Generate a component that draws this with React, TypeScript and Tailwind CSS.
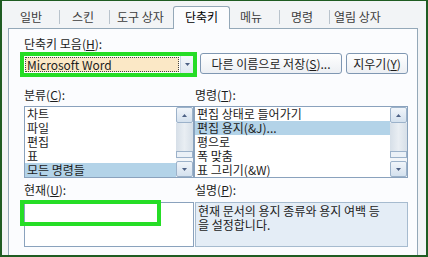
type ListBoxProps = {
  items: string[];
  selected: number;
  className: string;
};

function Mn({ children }: { children: string }) {
  return <span className="underline underline-offset-[1px]">{children}</span>;
}

function Arrow({ up }: { up?: boolean }) {
  return (
    <svg width="5" height="3" viewBox="0 0 5 3" className="text-[#4d6185]">
      <path d={up ? 'M0 3L2.5 0L5 3Z' : 'M0 0L2.5 3L5 0Z'} fill="currentColor" />
    </svg>
  );
}

function ScrollBar() {
  return (
    <div className="w-[17px] shrink-0 flex flex-col bg-[#f3f6f9]">
      <div className="h-[16px] flex items-center justify-center border border-[#9cb2ca] rounded-[2px] bg-gradient-to-b from-[#f1f5fa] to-[#d4e1ee]">
        <Arrow up />
      </div>
      <div className="flex-1 bg-gradient-to-r from-[#d6dfe8] via-[#e9eef3] to-[#d6dfe8]" />
      <div className="h-[7px] border border-[#9cb2ca] bg-[#ebf1f7]" />
      <div className="h-[3px]" />
      <div className="h-[16px] flex items-center justify-center border border-[#9cb2ca] rounded-[2px] bg-gradient-to-b from-[#f1f5fa] to-[#d4e1ee]">
        <Arrow />
      </div>
    </div>
  );
}

function ListBox({ items, selected, className }: ListBoxProps) {
  return (
    <div className={`h-[72px] flex border border-[#8aa2bd] bg-white ${className}`}>
      <div className="flex-1 flex flex-col">
        {items.map((item, i) => (
          <div
            key={item}
            className={`h-[14px] leading-[14px] pl-[2px] whitespace-nowrap ${
              i === selected ? 'bg-[#b3d3e8]' : ''
            }`}
          >
            {item}
          </div>
        ))}
      </div>
      <ScrollBar />
    </div>
  );
}

function Sep() {
  return <div className="w-px h-[14px] mt-[9px] bg-[#b9c3cc]" />;
}

export default function App() {
  return (
    <div className="w-[428px] h-[257px] overflow-hidden flex flex-col border-x-2 border-b-2 border-t border-[#1f5c22] bg-[#f2f4f6] text-[12px] text-[#1c1c1c] font-['Noto_Sans_CJK_KR',sans-serif]">
      {/* tabs */}
      <div className="h-[27px] shrink-0 flex items-start text-[#3c3c3c] leading-[14px]">
        <span className="ml-[18px] mt-[9px] w-[24px] whitespace-nowrap">일반</span>
        <div className="ml-[15px]"><Sep /></div>
        <span className="ml-[12px] mt-[9px] w-[24px] whitespace-nowrap">스킨</span>
        <div className="ml-[13px]"><Sep /></div>
        <span className="ml-[7px] mt-[9px] w-[51px] whitespace-nowrap">도구 상자</span>
        <div className="relative z-10 ml-[5px] mt-[5px] w-[57px] h-[23px] border-t border-x border-[#94a8b8] rounded-t-[3px] bg-[#fbfcfe] text-black text-center pt-[3px]">
          단축키
        </div>
        <span className="ml-[10px] mt-[9px] w-[26px] whitespace-nowrap">메뉴</span>
        <div className="ml-[13px]"><Sep /></div>
        <span className="ml-[11px] mt-[9px] w-[24px] whitespace-nowrap">명령</span>
        <div className="ml-[14px]"><Sep /></div>
        <span className="ml-[4px] mt-[9px] whitespace-nowrap">열림 상자</span>
      </div>

      {/* panel */}
      <div className="flex-1 ml-[6px] mr-[8px] border-t border-x border-[#94a8b8] bg-[#fbfcfe] flex flex-col leading-[14px]">
        <div className="ml-[15px] mt-[8px]">
          단축키 모음(<Mn>H</Mn>):
        </div>

        <div className="flex items-start mt-px">
          <div className="ml-[11px] w-[177px] h-[25px] border-4 border-[#26dd26] flex bg-white">
            <div className="flex-1 m-px border border-dotted border-[#444] bg-[#fbe8c6] pl-[1px] leading-[13px] whitespace-nowrap">
              Microsoft Word
            </div>
            <div className="w-[13px] flex items-center justify-center border-l border-[#c6d3e1] bg-gradient-to-b from-[#f5f8fb] to-[#dfe8f1]">
              <Arrow />
            </div>
          </div>
          <div className="ml-[3px] mt-px w-[142px] h-[21px] border border-[#7f97b2] rounded-[3px] bg-gradient-to-b from-white to-[#eceff3] flex items-center justify-center whitespace-nowrap">
            다른 이름으로 저장(<Mn>S</Mn>)...
          </div>
          <div className="ml-[4px] mt-px w-[62px] h-[21px] border border-[#7f97b2] rounded-[3px] bg-gradient-to-b from-white to-[#eceff3] flex items-center justify-center whitespace-nowrap">
            지우기(<Mn>Y</Mn>)
          </div>
        </div>

        <div className="ml-[15px] mt-[11px] flex">
          <div className="w-[170px]">
            분류(<Mn>C</Mn>):
          </div>
          <div className="pl-px">
            명령(<Mn>T</Mn>):
          </div>
        </div>

        <div className="ml-[15px] mt-[4px] flex">
          <ListBox
            className="w-[170px]"
            items={['차트', '파일', '편집', '표', '모든 명령들']}
            selected={4}
          />
          <ListBox
            className="w-[214px]"
            items={['편집 상태로 들어가기', '편집 용지(&J)...', '평으로', '폭 맞춤', '표 그리기(&W)']}
            selected={1}
          />
        </div>

        <div className="ml-[15px] mt-[5px] flex">
          <div className="w-[171px]">
            현재(<Mn>U</Mn>):
          </div>
          <div>
            설명(<Mn>P</Mn>):
          </div>
        </div>

        <div className="ml-[15px] mt-[5px] flex">
          <div className="relative w-[170px] h-[45px] border border-[#8aa2bd] bg-white">
            <div className="absolute -left-[5px] -top-[3px] w-[141px] h-[26px] border-4 border-[#26dd26]" />
          </div>
          <div className="ml-px w-[213px] h-[45px] border border-[#a6bbcf] bg-[#e4edf6] pl-[2px] pt-[1px] whitespace-nowrap">
            <div>현재 문서의 용지 종류와 용지 여백 등</div>
            <div>을 설정합니다.</div>
          </div>
        </div>
      </div>
    </div>
  );
}
